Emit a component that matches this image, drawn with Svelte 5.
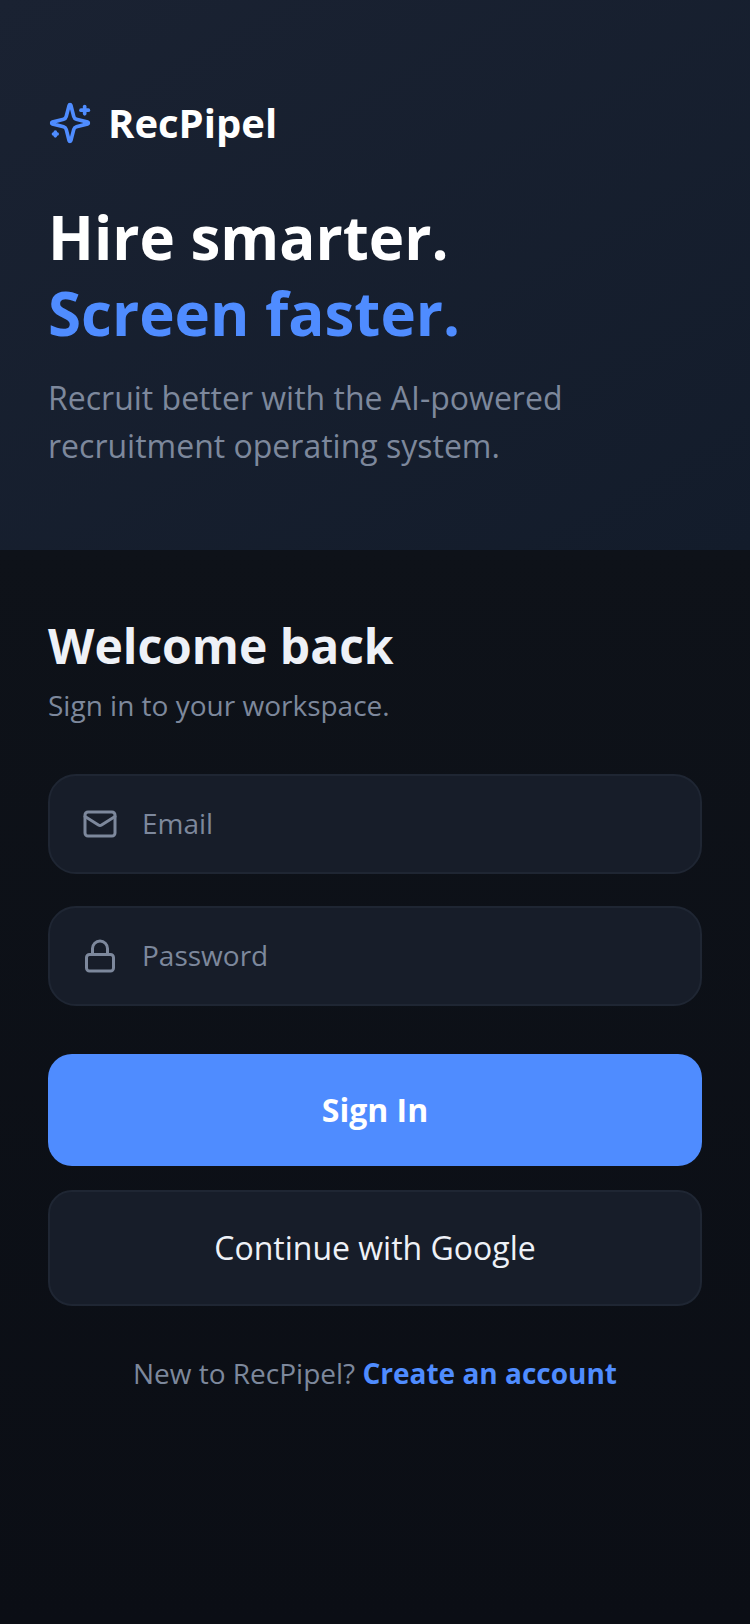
<script>
	let email = "";
	let password = "";
</script>

<div class="page">
	<header class="hero">
		<div class="brand">
			<svg class="spark" viewBox="0 0 24 24" fill="none" stroke="currentColor" stroke-width="2" stroke-linecap="round" stroke-linejoin="round">
				<path d="M9.937 15.5A2 2 0 0 0 8.5 14.063l-6.135-1.582a.5.5 0 0 1 0-.962L8.5 9.936A2 2 0 0 0 9.937 8.5l1.582-6.135a.5.5 0 0 1 .963 0L14.063 8.5A2 2 0 0 0 15.5 9.937l6.135 1.581a.5.5 0 0 1 0 .964L15.5 14.063a2 2 0 0 0-1.437 1.437l-1.582 6.135a.5.5 0 0 1-.963 0z" />
				<path d="M20 3v4" />
				<path d="M22 5h-4" />
				<path d="M4 17v2" />
				<path d="M5 18H3" />
			</svg>
			<span class="brand_name">RecPipel</span>
		</div>
		<h1>Hire smarter.<br /><span class="accent">Screen faster.</span></h1>
		<p class="tagline">Recruit better with the AI-powered recruitment operating system.</p>
	</header>

	<main class="panel">
		<h2>Welcome back</h2>
		<p class="sub">Sign in to your workspace.</p>

		<form class="fields" on:submit|preventDefault>
			<label class="field">
				<svg class="field_icon" viewBox="0 0 24 24" fill="none" stroke="currentColor" stroke-width="2" stroke-linecap="round" stroke-linejoin="round">
					<rect x="2" y="4" width="20" height="16" rx="2" />
					<path d="m22 7-8.97 5.7a1.94 1.94 0 0 1-2.06 0L2 7" />
				</svg>
				<input type="email" placeholder="Email" bind:value={email} />
			</label>
			<label class="field">
				<svg class="field_icon" viewBox="0 0 24 24" fill="none" stroke="currentColor" stroke-width="2" stroke-linecap="round" stroke-linejoin="round">
					<rect x="3" y="11" width="18" height="11" rx="2" />
					<path d="M7 11V7a5 5 0 0 1 10 0v4" />
				</svg>
				<input type="password" placeholder="Password" bind:value={password} />
			</label>

			<button class="sign_in" type="submit">Sign In</button>
			<button class="google" type="button">Continue with Google</button>
		</form>

		<p class="signup">New to RecPipel? <a href="#signup">Create an account</a></p>
	</main>
</div>

<style>
	:global(body) {
		background: #0b0e15;
	}

	.page {
		min-height: 1624px;
		display: flex;
		flex-direction: column;
		font-family: "Open Sans", sans-serif;
	}

	.hero {
		height: 550px;
		box-sizing: border-box;
		padding: 101px 48px 0;
		background: linear-gradient(150deg, #1a2232, #131c2b);
	}

	.brand {
		display: flex;
		align-items: center;
		gap: 16px;
	}

	.spark {
		width: 44px;
		height: 44px;
		color: #4f8cff;
	}

	.brand_name {
		font-size: 40px;
		line-height: 44px;
		font-weight: 700;
		color: #fff;
	}

	h1 {
		margin: 54px 0 0;
		font-size: 60px;
		line-height: 76px;
		font-weight: 700;
		color: #fff;
	}

	.accent {
		color: #4f8cff;
	}

	.tagline {
		margin: 23px 0 0;
		font-size: 32px;
		line-height: 48px;
		color: #7d889c;
	}

	.panel {
		flex: 1;
		padding: 67px 48px 0;
		background: linear-gradient(180deg, #0e1219, #0b0e15);
	}

	h2 {
		margin: 0;
		font-size: 48px;
		line-height: 58px;
		font-weight: 700;
		color: #eef1f7;
	}

	.sub {
		margin: 11px 0 0;
		font-size: 28px;
		line-height: 38px;
		color: #7d889c;
	}

	.fields {
		margin-top: 50px;
		display: flex;
		flex-direction: column;
	}

	.field {
		height: 100px;
		box-sizing: border-box;
		margin-bottom: 32px;
		padding: 0 32px;
		display: flex;
		align-items: center;
		gap: 24px;
		background: #171d29;
		border: 2px solid #1f2633;
		border-radius: 28px;
	}

	.field_icon {
		width: 36px;
		height: 36px;
		flex: none;
		color: #7d889c;
	}

	input {
		flex: 1;
		min-width: 0;
		border: 0;
		outline: 0;
		padding: 0 0 2px;
		background: transparent;
		font: inherit;
		font-size: 28px;
		color: #eef1f7;
	}

	input::placeholder {
		color: #7d889c;
		opacity: 1;
	}

	button {
		font-family: inherit;
		padding: 0 0 2px;
		cursor: pointer;
	}

	.sign_in {
		height: 112px;
		margin-top: 16px;
		border: 0;
		border-radius: 24px;
		background: #4f8cff;
		color: #fff;
		font-size: 32px;
		font-weight: 700;
	}

	.google {
		height: 116px;
		margin-top: 24px;
		border: 2px solid #1f2633;
		border-radius: 24px;
		background: #171d29;
		color: #eef1f7;
		font-size: 32px;
	}

	.signup {
		margin: 48px 0 0;
		text-align: center;
		font-size: 28px;
		line-height: 38px;
		color: #7d889c;
	}

	.signup a {
		color: #4f8cff;
		font-weight: 700;
		text-decoration: none;
	}
</style>
